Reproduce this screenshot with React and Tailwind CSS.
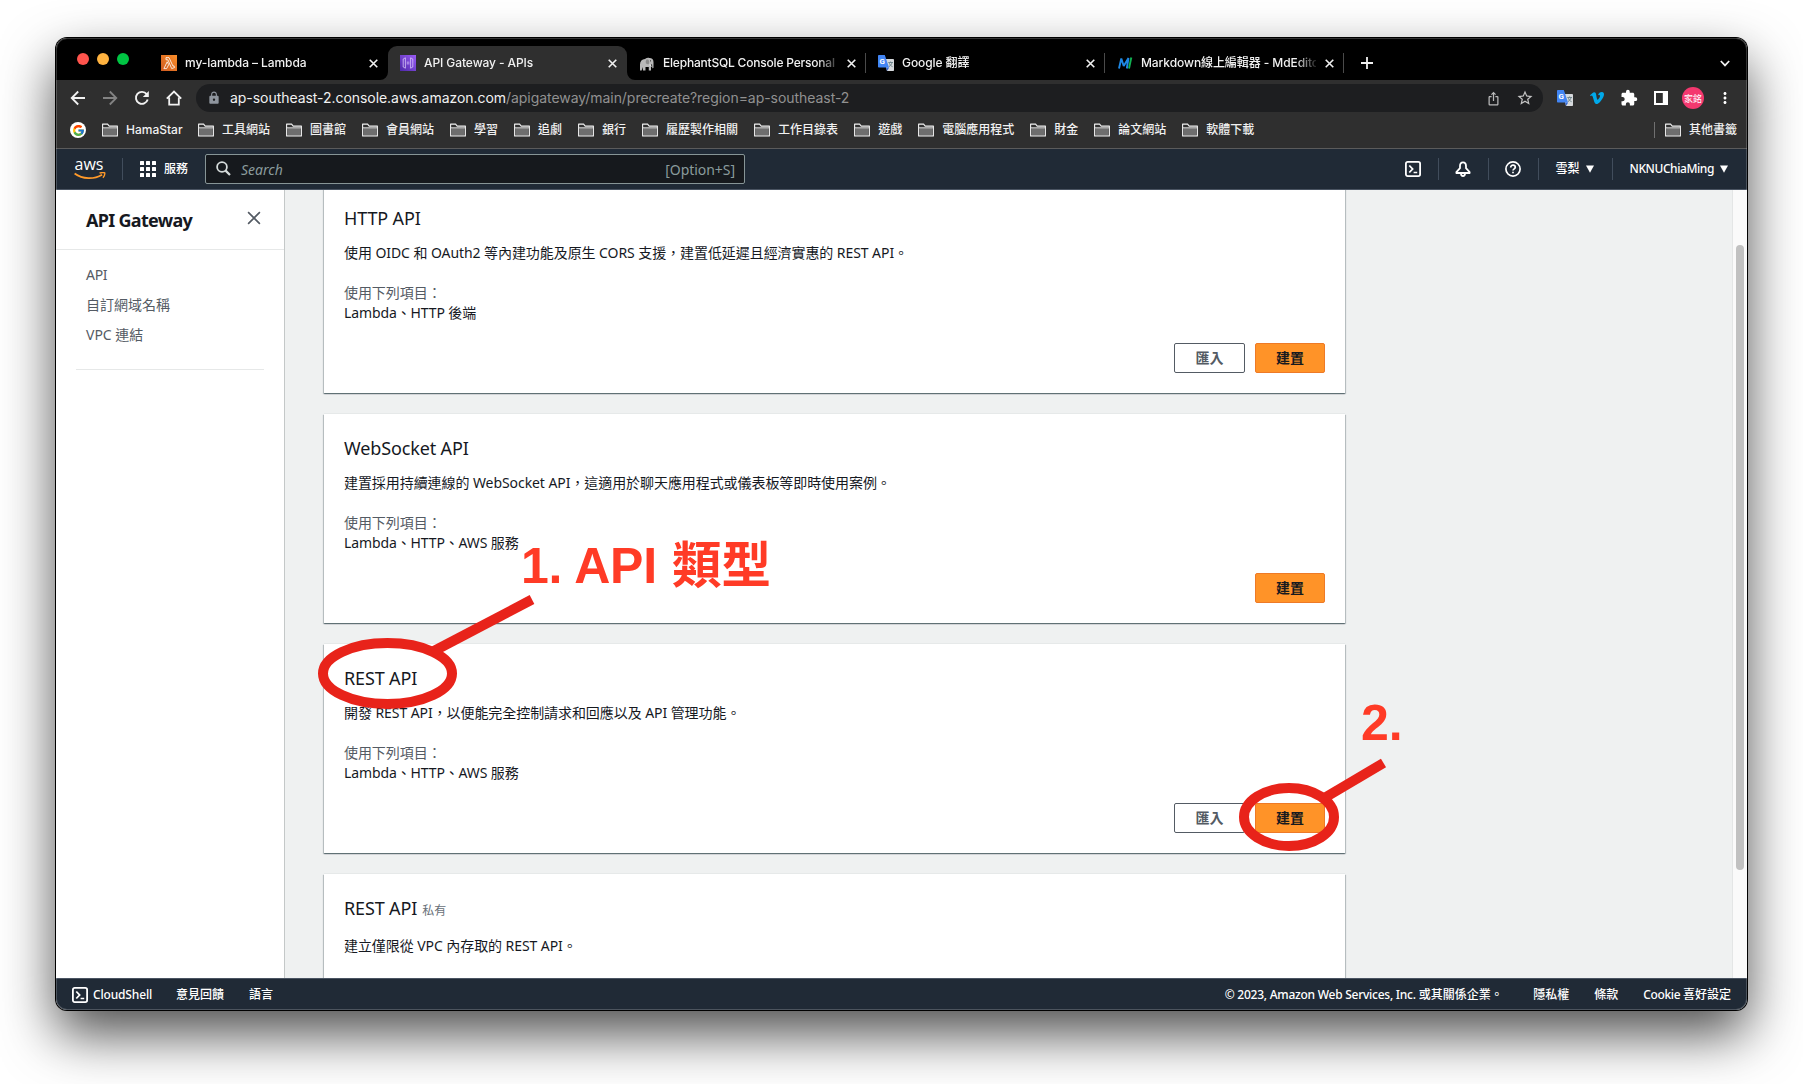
import React from 'react';
import { FcGoogle } from 'react-icons/fc';
import { FaVimeoV } from 'react-icons/fa';
import { MdExtension, MdLock, MdStarBorder, MdIosShare, MdMoreVert } from 'react-icons/md';

/* ---------- favicons and small drawings ---------- */

const LambdaIcon = () => (
  <svg width="16" height="16" viewBox="0 0 16 16" className="shrink-0">
    <defs>
      <linearGradient id="lam" x1="0" y1="1" x2="1" y2="0">
        <stop offset="0" stopColor="#cf5a20" />
        <stop offset="1" stopColor="#fb8f2a" />
      </linearGradient>
    </defs>
    <rect width="16" height="16" fill="url(#lam)" />
    <path d="M5 2.600h3l4 8.600 1-.4.600 1.700-2.900 1.100L6.900 4.800H5zM6.200 6.800l1.500 2.900-2.100 3.900H2.900z" fill="none" stroke="#fff" strokeWidth=".8" strokeLinejoin="round" />
  </svg>
);

const GatewayIcon = () => (
  <svg width="16" height="16" viewBox="0 0 16 16" className="shrink-0">
    <defs>
      <linearGradient id="gw" x1="0" y1="1" x2="1" y2="0">
        <stop offset="0" stopColor="#4d27a8" />
        <stop offset="1" stopColor="#9a5cf5" />
      </linearGradient>
    </defs>
    <rect width="16" height="16" fill="url(#gw)" />
    <path d="M5.400 2.800 3.200 4v8l2.200 1.200zM10.600 2.800 12.800 4v8l-2.200 1.200z" fill="none" stroke="#e6d9ff" strokeWidth=".7" />
    <path d="M7.300 6.500v3M8.800 6.500v3" stroke="#e6d9ff" strokeWidth=".6" />
  </svg>
);

const ElephantIcon = () => (
  <svg width="16" height="16" viewBox="0 0 16 16" className="shrink-0">
    <path d="M1 9.500C1 6 3 4.200 6 4c1.600-1.200 3-1.400 4.400-1C13 3 14.500 4.500 14.500 7v5.500c0 .8-.6 1-1.200.5l-.3-4-1 1v5.500H9.800v-3.500H6.500v3.500H4l-.5-3.500-.8 3.500H1z" fill="#b9b9b9" />
    <path d="M9 4.500c1.500 1 1.600 3.500.3 5L7 8.500c-.6-1.600-.2-3 .7-4z" fill="#8b8b8b" />
    <path d="M11 9.500c0 1.500 1 2 2 1.500" stroke="#fff" fill="none" strokeWidth=".9" />
    <circle cx="11.500" cy="5.800" r=".6" fill="#222" />
  </svg>
);

const TranslateIcon = () => (
  <span className="relative block h-4 w-4 shrink-0 font-[Roboto,'Noto_Sans_CJK_TC',sans-serif]">
    <svg width="16" height="16" viewBox="0 0 16 16" className="block">
      <path d="M6 4h9.200c.5 0 .8.300.8.800v10.400c0 .5-.3.800-.8.800H9z" fill="#d6d9dc" />
      <path d="M8.200 12.500h3L9 16z" fill="#3367d6" />
      <path d="M.8 0h6l4.200 12.500H.8c-.5 0-.8-.3-.8-.8V.8C0 .3.300 0 .8 0z" fill="#4285f4" />
      <path d="M10.300 7.500h4.700M12.600 6.500v1M14 7.600c-.4 1.700-1.500 3-3 4M11.300 8.200c.6 1.600 1.700 2.800 3.300 3.500" stroke="#667f86" strokeWidth=".9" fill="none" />
    </svg>
    <span className="absolute left-[1.500px] top-[2px] text-[8px] font-bold leading-[10px] text-white">G</span>
  </span>
);

const MdEditorIcon = () => (
  <svg width="16" height="16" viewBox="0 0 16 16" className="shrink-0">
    <path d="M2 13.500 4.300 3.500 6.700 11 11.500 3 9.800 13.500" fill="none" stroke="#1e88e5" strokeWidth="1.900" strokeLinejoin="bevel" />
    <path d="M14.300 2.500 12 13.500" stroke="#12b252" strokeWidth="1.900" />
  </svg>
);

const Close = ({ s = 9, w = 1.8, c = '#f1f1f1' }) => (
  <svg width={s} height={s} viewBox="0 0 10 10" className="shrink-0">
    <path d="M.8.8l8.400 8.400M9.200.8.8 9.200" stroke={c} strokeWidth={w} />
  </svg>
);

const Folder = () => (
  <svg width="16" height="14" viewBox="0 0 16 14" className="shrink-0">
    <path d="M.6 12.900V1.100h5l1.600 2h8.200v9.800z" fill="#2f2f2f" stroke="#f1f1f1" strokeWidth="1.100" strokeLinejoin="round" />
    <path d="M1.200 5h13.600v7.300H1.200z" fill="#6e6e6e" />
    <path d="M1 4.800h14" stroke="#f1f1f1" strokeWidth=".9" />
  </svg>
);

const ShellIcon = ({ s = 16 }) => (
  <svg width={s} height={s} viewBox="0 0 16 16" className="shrink-0" fill="none" stroke="#fff">
    <rect x=".9" y=".9" width="14.200" height="14.200" rx="1.800" strokeWidth="1.800" />
    <path d="M4.300 4.500 7.600 8l-3.300 3.500" strokeWidth="1.800" />
    <path d="M8.600 11.500h3.600" strokeWidth="1.700" />
  </svg>
);

const Caret = () => (
  <svg width="8" height="8" viewBox="0 0 8 8" className="shrink-0">
    <path d="M0 .600h8L4 7.800z" fill="#fff" />
  </svg>
);

/* ---------- browser chrome ---------- */

const TABS = [
  { t: 'my-lambda – Lambda', icon: <LambdaIcon /> },
  { t: 'API Gateway - APIs', icon: <GatewayIcon />, active: true },
  { t: 'ElephantSQL Console Personal', icon: <ElephantIcon />, sep: true, tight: true },
  { t: 'Google 翻譯', icon: <TranslateIcon />, sep: true },
  { t: 'Markdown線上編輯器 - MdEdito', icon: <MdEditorIcon />, sep: true },
];

const Tab = ({ t, icon, active, sep, tight }) => (
  <div
    className={
      'relative flex h-[34px] w-[239px] shrink-0 items-center pl-[12.5px] ' +
      (active ? 'rounded-t-[9px] bg-[#2f2f2f]' : '')
    }
  >
    {active && (
      <>
        <svg width="8" height="8" className="absolute -left-2 bottom-0"><path d="M8 0v8H0a8 8 0 0 0 8-8z" fill="#2f2f2f" /></svg>
        <svg width="8" height="8" className="absolute -right-2 bottom-0"><path d="M0 0v8h8a8 8 0 0 1-8-8z" fill="#2f2f2f" /></svg>
      </>
    )}
    {icon}
    <span
      className={
        'ml-2 w-[175px] overflow-hidden whitespace-nowrap text-[12px] leading-4 text-[#f1f1f1] [mask-image:linear-gradient(to_right,black_88%,rgba(0,0,0,0.15))] ' +
        (tight ? 'tracking-[-0.2px]' : 'tracking-[-0.08px]')
      }
    >
      {t}
    </span>
    <span className="ml-[8.500px] flex"><Close /></span>
    {sep && <span className="ml-auto h-[20px] w-px bg-[#4a4a4a]" />}
  </div>
);

const BOOKMARKS = ['HamaStar', '工具網站', '圖書館', '會員網站', '學習', '追劇', '銀行', '履歷製作相關', '工作目錄表', '遊戲', '電腦應用程式', '財金', '論文網站', '軟體下載'];

const BrowserChrome = () => (
  <div className="font-[Inter,'Noto_Sans_CJK_TC',sans-serif] font-medium">
    <div className="flex h-[42px] items-end bg-black pl-[21px]">
      <div className="flex h-[34px] w-[71.500px] shrink-0 gap-2 pt-[7px]">
        <span className="h-3 w-3 rounded-full bg-[#ff544d]" />
        <span className="h-3 w-3 rounded-full bg-[#ffb340]" />
        <span className="h-3 w-3 rounded-full bg-[#00c543]" />
      </div>
      {TABS.map((x) => <Tab key={x.t} {...x} />)}
      <div className="flex h-[34px] flex-1 items-center justify-between pl-[17px] pr-[17px]">
        <svg width="12" height="12" viewBox="0 0 12 12"><path d="M6 0v12M0 6h12" stroke="#f1f1f1" strokeWidth="1.800" /></svg>
        <svg width="10" height="7" viewBox="0 0 10 7"><path d="M.8 1 5 5.400 9.200 1" fill="none" stroke="#f1f1f1" strokeWidth="1.700" /></svg>
      </div>
    </div>

    <div className="bg-[#2f2f2f]">
      <div className="flex h-9 items-center pl-[14px] pr-[14px]">
        <div className="flex gap-4 text-[#f1f1f1]">
          <svg width="16" height="16" viewBox="0 0 16 16" fill="none" stroke="currentColor" strokeWidth="1.800"><path d="M15 8H2M8.200 1.500 1.700 8l6.500 6.500" /></svg>
          <svg width="16" height="16" viewBox="0 0 16 16" fill="none" stroke="#838383" strokeWidth="1.800"><path d="M1 8h13M7.800 1.500 14.300 8l-6.500 6.500" /></svg>
          <svg width="16" height="16" viewBox="0 0 16 16" fill="none" stroke="currentColor" strokeWidth="1.900"><path d="M13.700 9.600A6 6 0 1 1 12.700 4.200" /><path d="M14.800 1v6H8.800z" fill="currentColor" stroke="none" /></svg>
          <svg width="16" height="16" viewBox="0 0 16 16" fill="none" stroke="currentColor" strokeWidth="1.800"><path d="M.8 8.700 8 1.500l7.200 7.200M3.200 7.500v7.200h9.600V7.500" /></svg>
        </div>
        <div className="ml-[14px] flex h-7 w-[1347px] items-center rounded-full bg-[#1d1e20] pl-[11px] pr-[9px]">
          <MdLock className="h-[14px] w-[14px] text-[#8f959e]" />
          <span className="mb-[2px] ml-[9px] whitespace-nowrap text-[14px] font-normal tracking-[-0.05px] text-[#f1f1f1]">
            ap-southeast-2.console.aws.amazon.com<span className="text-[#919191]">/apigateway/main/precreate?region=ap-southeast-2</span>
          </span>
          <MdIosShare className="ml-auto h-[15px] w-[15px] text-[#b9b9b9]" />
          <MdStarBorder className="ml-[15px] h-[18px] w-[18px] text-[#c4c4c4]" />
        </div>
        <div className="ml-auto flex items-center text-[#fff]">
          <TranslateIcon />
          <FaVimeoV className="ml-4 h-4 w-4 text-[#00a9ea]" />
          <MdExtension className="ml-[15px] h-[18px] w-[18px]" />
          <svg width="14" height="14" viewBox="0 0 14 14" className="ml-4"><path d="M0 0h14v14H0zM2 2v10h6.800V2z" fill="#fff" fillRule="evenodd" /></svg>
          <span className="ml-[14px] flex h-[22px] w-[22px] items-center justify-center rounded-full bg-[#f4386f] text-[9px] font-normal leading-none">家銘</span>
          <MdMoreVert className="-mr-[1px] ml-3 h-[18px] w-[18px]" />
        </div>
      </div>

      <div className="flex h-7 items-center gap-4 whitespace-nowrap pl-[14px] pr-[10px] text-[12px] leading-4 text-[#f1f1f1]">
        <span className="flex h-4 w-4 items-center justify-center rounded-full bg-white"><FcGoogle className="h-[13px] w-[13px]" /></span>
        {BOOKMARKS.map((b) => (
          <span key={b} className="flex items-center gap-2"><Folder /><span className={b === 'HamaStar' ? 'w-[56px]' : ''}>{b}</span></span>
        ))}
        <span className="ml-auto flex items-center gap-2">
          <span className="mr-[2px] h-4 w-px bg-[#707070]" />
          <Folder />其他書籤
        </span>
      </div>
      <div className="h-[5px] border-b border-[#5b5b5b]" />
    </div>
  </div>
);

/* ---------- AWS console ---------- */

const Bar = () => <span className="h-[22px] w-px bg-[#414d5c]" />;

const AwsHeader = () => (
  <div className="flex h-[41px] items-center border-b border-[#4a5462] bg-[#202a36] pl-[18px] pr-[19px] font-['Noto_Sans','Noto_Sans_CJK_TC',sans-serif] text-[12px] font-medium text-white">
    <div className="flex h-[22px] w-8 flex-col">
      <span className="h-[14px] pl-[0.500px] font-['Open_Sans',sans-serif] text-[16px] font-medium leading-[13px]">aws</span>
      <svg width="32" height="8" viewBox="0 0 32 8" className="shrink-0" fill="none" stroke="#ff9a2a">
        <path d="M.6 1.500c8 6 19.500 6 27.500 1.200" strokeWidth="1.800" />
        <path d="M25.500 1.200c2-.8 4-.9 5.200-.4.300 1.500-.4 3.500-1.800 5" strokeWidth="1.400" />
      </svg>
    </div>
    <span className="ml-4 h-[22px] w-px bg-[#414d5c]" />
    <svg width="16" height="16" viewBox="0 0 16 16" fill="#fff" className="ml-[17px]">
      {[0, 6, 12].map((y) => [0, 6, 12].map((x) => <rect key={x + '-' + y} x={x} y={y} width="4" height="4" rx=".5" />))}
    </svg>
    <span className="ml-2 leading-4">服務</span>
    <div className="ml-[17px] flex h-[30px] w-[540px] items-center rounded-[2px] border border-[#879596] bg-[#16191d] px-[10px] text-[14px] font-normal text-[#8a9b9c]">
      <svg width="15" height="15" viewBox="0 0 15 15" fill="none" stroke="#d5dbdb" strokeWidth="1.800"><circle cx="6" cy="6" r="4.900" /><path d="M9.600 9.600 14 14" strokeWidth="2.200" /></svg>
      <span className="ml-[10px] mt-[2px] italic">Search</span>
      <span className="-mr-px ml-auto mt-[2px] tracking-[-0.05px]">[Option+S]</span>
    </div>
    <div className="ml-auto flex items-center gap-[16.500px]">
      <ShellIcon />
      <Bar />
      <svg width="16" height="16" viewBox="0 0 16 16" fill="none" stroke="#fff" strokeWidth="1.800">
        <path d="M8 1.400c2 0 3 1.500 3 3.600v2.200l3.600 4v.8H1.400v-.8l3.600-4V5c0-2.100 1-3.600 3-3.600z" strokeLinejoin="round" />
        <path d="M6 12.500c0 1.500.7 2.500 2 2.500s2-1 2-2.500" />
      </svg>
      <Bar />
      <svg width="16" height="16" viewBox="0 0 16 16" fill="none" stroke="#fff" strokeWidth="1.700">
        <circle cx="8" cy="8" r="7.100" />
        <path d="M5.700 6.500c0-1.400 1-2.300 2.300-2.300s2.300.9 2.300 2.100c0 1.500-2.300 1.600-2.300 3.200" />
        <path d="M8 10.700v1.600" />
      </svg>
      <Bar />
      <span className="mr-[2px] flex items-center gap-[6px]">雪梨<Caret /></span>
      <Bar />
      <span className="flex items-center gap-[6px]"><span className="mt-px tracking-[-0.420px]">NKNUChiaMing</span><Caret /></span>
    </div>
  </div>
);

const Sidebar = () => (
  <div className="w-[229px] shrink-0 border-r border-[#c4c8c8] bg-white">
    <div className="flex h-[60px] justify-between border-b border-[#e6e8e8] pl-[30px] pr-[23px]">
      <span className="mt-[18px] text-[18px] font-bold leading-6 tracking-[-0.700px] text-[#16191f]">API Gateway</span>
      <span className="mt-[21px]"><Close s={14} w={1.2} c="#545b64" /></span>
    </div>
    <div className="px-[30px] pt-[10px] text-[14px] leading-[30px] text-[#545b64]">
      <div className="tracking-[-0.300px]">API</div>
      <div>自訂網域名稱</div>
      <div>VPC 連結</div>
    </div>
    <div className="mx-5 mt-[19px] h-px bg-[#e6e8e8]" />
  </div>
);

const CARDS = [
  { title: 'HTTP API', desc: '使用 OIDC 和 OAuth2 等內建功能及原生 CORS 支援，建置低延遲且經濟實惠的 REST API。', works: 'Lambda、HTTP 後端', imp: true },
  { title: 'WebSocket API', desc: '建置採用持續連線的 WebSocket API，這適用於聊天應用程式或儀表板等即時使用案例。', works: 'Lambda、HTTP、AWS 服務' },
  { title: 'REST API', desc: '開發 REST API，以便能完全控制請求和回應以及 API 管理功能。', works: 'Lambda、HTTP、AWS 服務', imp: true },
  { title: 'REST API', tag: '私有', desc: '建立僅限從 VPC 內存取的 REST API。' },
];

const Card = ({ title, tag, desc, works, imp }) => (
  <div className="h-[209px] shrink-0 bg-white px-5 pt-[23px] text-[14px] leading-5 tracking-[-0.070px] text-[#16191f] shadow-[0_1px_1px_rgba(0,28,36,0.4),1px_1px_1px_rgba(0,28,36,0.18),-1px_1px_1px_rgba(0,28,36,0.18),0_-1px_0_#e6e9e9]">
    <div className="h-[22px] text-[18px] leading-[22px] tracking-[-0.140px]">
      {title}
      {tag && <span className="ml-[5px] text-[12px] tracking-normal text-[#687078]">{tag}</span>}
    </div>
    <div className={tag ? 'mt-[17px]' : 'mt-[14px]'}>{desc}</div>
    {works && (
      <>
        <div className="mt-5 text-[#545b64]">使用下列項目：</div>
        <div className="tracking-[-0.120px]">{works}</div>
        <div className="mt-5 flex justify-end gap-[10px] font-bold leading-7">
          {imp && <button className="h-[30px] w-[71px] rounded-[2px] border border-[#545b64] bg-white text-[#545b64]">匯入</button>}
          <button className="h-[30px] w-[70px] rounded-[2px] border border-[#ee7a27] bg-[#ff9328] text-[#16191f]">建置</button>
        </div>
      </>
    )}
  </div>
);

const Footer = () => (
  <div className="flex h-[32px] items-center border-t border-[#4a5462] bg-[#202a36] pl-4 pr-[16px] font-['Noto_Sans','Noto_Sans_CJK_TC',sans-serif] text-[12px] font-medium leading-4 text-white">
    <ShellIcon />
    <span className="ml-[5px] tracking-[-0.160px]">CloudShell</span>
    <span className="ml-6">意見回饋</span>
    <span className="ml-[25px]">語言</span>
    <span className="ml-auto"><span className="tracking-[-0.250px]">© 2023, Amazon Web Services, Inc. </span>或其關係企業。</span>
    <span className="ml-[30.500px]">隱私權</span>
    <span className="ml-[25px]">條款</span>
    <span className="ml-[25px]"><span className="tracking-[-0.350px]">Cookie </span>喜好設定</span>
  </div>
);

/* Red hand-placed callouts that lie over the window */
const Annotations = () => (
  <div className="pointer-events-none absolute inset-0 whitespace-nowrap font-['Liberation_Sans','Noto_Sans_CJK_TC',sans-serif] text-[50px] font-bold leading-[50px] text-[#ff3b26]">
    <svg width="1803" height="1084" className="absolute inset-0" fill="none" stroke="#e8231a" strokeWidth="10">
      <ellipse cx="387.500" cy="673.500" rx="64.500" ry="30.500" />
      <path d="M532 599.500 432 652" />
      <ellipse cx="1289" cy="817" rx="45" ry="29" />
      <path d="M1383.500 763 1326 797" />
    </svg>
    <span className="absolute left-[521px] top-[541px]"><span className="tracking-[-0.200px]">1. API </span><span className="ml-[1.500px] text-[49.500px]">類型</span></span>
    <span className="absolute left-[1361px] top-[698px]">2.</span>
  </div>
);

export default function App() {
  return (
    <div className="relative h-[1084px] w-[1803px] overflow-hidden bg-white pl-[56px] pt-[38px]">
      <div className="h-[972px] w-[1691px] rounded-[11px] shadow-[0_0_0_1px_#000,0_24px_54px_rgba(0,0,0,0.7)]">
        <div className="flex h-full flex-col overflow-hidden rounded-[11px]">
          <BrowserChrome />
          <AwsHeader />
          <div className="flex h-[789px] overflow-hidden bg-[#eff1f1] font-['Noto_Sans','Noto_Sans_CJK_TC',sans-serif]">
            <Sidebar />
            <div className="-mt-[6px] ml-[39px] flex w-[1021px] flex-col gap-[21px]">
              {CARDS.map((c, i) => <Card key={i} {...c} />)}
            </div>
            <div className="ml-auto w-[15px] border-l border-[#e4e6e6] bg-[#fafafa] pl-[3px] pt-[55.500px]">
              <div className="h-[625px] w-2 rounded-full bg-[#c1c1c1]" />
            </div>
          </div>
          <Footer />
        </div>
      </div>
      <div className="pointer-events-none absolute left-[56px] top-[38px] h-[972px] w-[1691px] rounded-[11px] shadow-[inset_0_0_0_1px_rgba(255,255,255,0.2)]" />
      <Annotations />
    </div>
  );
}
